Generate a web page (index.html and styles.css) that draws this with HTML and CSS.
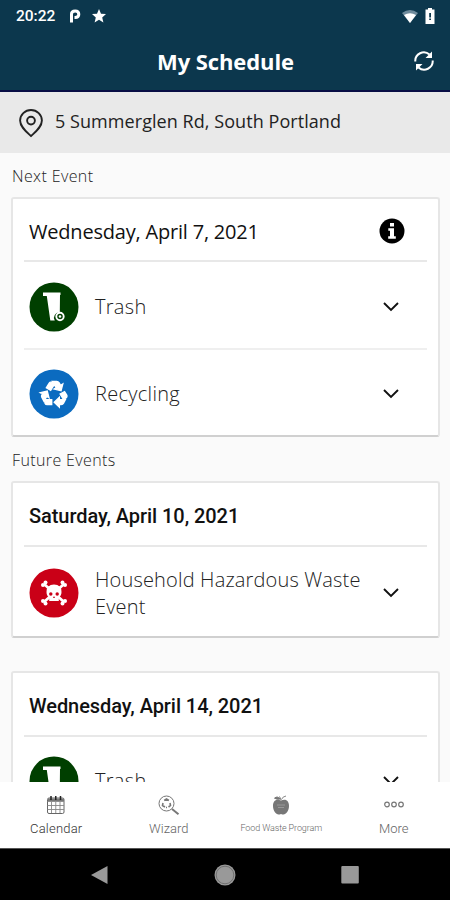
FILE: index.html
```
<!DOCTYPE html>
<html lang="en">
<head>
<meta charset="utf-8">
<title>My Schedule</title>
<link rel="stylesheet" href="styles.css">
</head>
<body>
<svg class="defs" width="0" height="0">
  <symbol id="chevron" viewBox="0 0 18 12"><path d="M2 2l7 7 7-7" fill="none" stroke="#111" stroke-width="1.9"/></symbol>
  <symbol id="bin" viewBox="0 0 50 50">
    <circle cx="25" cy="25" r="24.5" fill="#003f00"/>
    <path d="M14 10.500h17.500v2.600h-.5l-.2 17.500a5.200 5.200 0 0 0-5 8H21.300L17.800 14H14z" fill="#fff"/>
    <circle cx="31" cy="34.500" r="3.700" fill="none" stroke="#fff" stroke-width="1.900"/>
    <circle cx="31" cy="34.500" r="1.300" fill="#fff"/>
  </symbol>
</svg>
<div class="phone">
  <div class="status">
    <span class="time">20:22</span>
    <svg class="parking" width="12" height="14" viewBox="0 0 12 14"><path d="M2.500 13.500V5Q2.500 2 6.200 2q3.600 0 3.600 3.200T6.200 8.500H5.500" fill="none" stroke="#fff" stroke-width="3"/></svg>
    <svg class="star" width="14" height="14" viewBox="0 0 14 14"><path d="M7 0l2 4.700 5 .4-3.800 3.300L11.400 13.400 7 10.700 2.600 13.400l1.200-5L0 5.100l5-.4z" fill="#fff"/></svg>
    <svg class="wifi" width="16" height="13" viewBox="0 0 16 13"><path d="M0 3q8-6 16 0L8 13z" fill="#6f8b9c"/><path d="M2 5q6-3.500 12 0L8 13z" fill="#fff"/></svg>
    <svg class="battery" width="10" height="16" viewBox="0 0 10 16"><path d="M3 0h4v1.500h2.500V16H.5V1.500H3z" fill="#fff"/><path d="M4.200 5h1.800v4.500H4.200zM4.200 10.500h1.800V12H4.200z" fill="#0c374d"/></svg>
  </div>
  <header class="header">
    <h1>My Schedule</h1>
    <svg class="refresh" width="20" height="20" viewBox="0 0 20 20"><path d="M1.300 10.500A8.500 8.500 0 0 1 15.500 3.600M18.700 9.500A8.500 8.500 0 0 1 4.500 16.400" fill="none" stroke="#fff" stroke-width="2"/><path d="M18 .5V7h-6.500zM2 19.500V13h6.500z" fill="#fff"/></svg>
  </header>
  <div class="address">
    <svg width="26" height="30" viewBox="0 0 26 30"><path d="M13 28C8.500 23.800 2.100 19 2.100 12.500a10.900 10.500 0 0 1 21.800 0C23.900 19 17.500 23.800 13 28z" fill="none" stroke="#222" stroke-width="1.900"/><circle cx="13" cy="12.600" r="3.900" fill="none" stroke="#222" stroke-width="1.900"/></svg>
    <span>5 Summerglen Rd, South Portland</span>
  </div>
  <main class="content">
    <h2 class="next">Next Event</h2>
    <section class="card first">
      <div class="date regular"><span>Wednesday, April 7, 2021</span>
        <svg width="26" height="26" viewBox="0 0 26 26"><circle cx="13" cy="13" r="12.500"/><path d="M11 5h4v3.500h-4zM9.300 10.300H15v8h1.800v2.400H9.200v-2.400H11v-5.600H9.300z" fill="#fff"/></svg>
      </div>
      <div class="row"><svg class="badge"><use href="#bin"/></svg><span class="trash">Trash</span><svg class="chev"><use href="#chevron"/></svg></div>
      <div class="row">
        <svg class="badge" viewBox="0 0 50 50"><circle cx="25" cy="25" r="24.500" fill="#0b6bc0"/><g transform="translate(10 10) scale(1.270 1.220)" fill="#fff"><path d="M5.770 7.150 7.200 4.780l1.030-1.710c.39-.65 1.330-.65 1.720 0l1.480 2.460-1.230 2.060-1 1.620-3.430-2.060zm15.950 5.820-1.600-2.660-3.460 2L18.870 16H20c.76 0 1.450-.43 1.790-1.110.14-.28.21-.58.21-.89 0-.36-.1-.71-.28-1.030zM16 21h1.500c.76 0 1.450-.43 1.790-1.110L20.740 17H16v-2l-4 4 4 4v-2zm-6-4H5.700l-.84 1.410c-.3.5-.32 1.120-.06 1.650.28.570.87.940 1.520.94H10v-4zm-3.880-2.650 1.730 1.040L6.480 9.900 1 11.270l1.700 1.020-.41.690c-.35.590-.38 1.310-.07 1.920l1.630 3.260 2.270-3.810zm10.900-9.210-1.300-2.170C15.350 2.370 14.700 2 14 2h-3.530l3.120 5.200-1.720 1.030 5.490 1.370 1.370-5.490-1.710 1.030z" stroke="#fff" stroke-width="1.100"/></g></svg>
        <span class="recycling">Recycling</span><svg class="chev"><use href="#chevron"/></svg>
      </div>
    </section>
    <h2 class="future">Future Events</h2>
    <section class="card second">
      <div class="date bold"><span class="sat">Saturday, April 10, 2021</span></div>
      <div class="row">
        <svg class="badge" viewBox="0 0 50 50"><circle cx="25" cy="25" r="24.500" fill="#ca0017"/><g stroke="#fff" stroke-width="2.800"><path d="M15 16l20 18M35 16L15 34"/></g><g fill="#fff"><circle cx="14" cy="17" r="2"/><circle cx="16.500" cy="14.500" r="2"/><circle cx="36" cy="17" r="2"/><circle cx="33.500" cy="14.500" r="2"/><circle cx="14" cy="33" r="2"/><circle cx="16.500" cy="35.500" r="2"/><circle cx="36" cy="33" r="2"/><circle cx="33.500" cy="35.500" r="2"/><path d="M17.500 24q0-7.500 7.500-7.500t7.500 7.500q0 4-2.700 5.300V33H20.200v-3.700Q17.500 28 17.500 24z"/></g><g fill="#ca0017"><circle cx="21.800" cy="26" r="1.700"/><circle cx="28.200" cy="26" r="1.700"/><path d="M25 28l1 2h-2z"/></g></svg>
        <span class="hazard">Household Hazardous Waste<br>Event</span><svg class="chev"><use href="#chevron"/></svg>
      </div>
    </section>
    <section class="card third">
      <div class="date bold"><span class="wed">Wednesday, April 14, 2021</span></div>
      <div class="row"><svg class="badge"><use href="#bin"/></svg><span class="trash">Trash</span><svg class="chev"><use href="#chevron"/></svg></div>
    </section>
  </main>
  <nav class="tabs">
    <div class="tab active"><svg width="20" height="20" viewBox="0 0 20 20"><rect x="1.500" y="3" width="16.500" height="15.500" rx="1.500" fill="none" stroke="#666"/><path d="M1.500 6.500H18M1.500 10.500H18M1.500 14.500H18M5.500 7v11M9.750 7v11M14 7v11" stroke="#888" stroke-width=".9"/><path d="M2 4.800h16" stroke="#777" stroke-width="2.600"/><path d="M5 1v4M9.750 1v4M14.500 1v4" stroke="#222" stroke-width="1.500"/></svg><span class="calendar">Calendar</span></div>
    <div class="tab"><svg width="22" height="20" viewBox="0 0 22 20"><circle cx="8.500" cy="8.500" r="7.500" fill="none" stroke="#777"/><path d="M6.200 5.500L8.500 4l2.400 1.500M12 8l.5 2.500-2 1.500M7 12l-2.500-1.500L5 8M8 12.500h1" fill="none" stroke="#777" stroke-width="1.600"/><path d="M14 14l6.500 5.200" stroke="#777" stroke-width="2"/></svg><span class="wizard">Wizard</span></div>
    <div class="tab"><svg width="18" height="20" viewBox="0 0 18 20"><path d="M9 5.500C3.500 3.500 1 6.500 1 11s3 8.500 5.500 8.500q1.200 0 2.500-.5 1.300.5 2.500.5C14 19.500 17 15.500 17 11s-2.500-7.500-8-5.500z" fill="#777"/><path d="M9 5L7.500 1.500M8 4Q5.500.5 2.500 3.200 5.500 5 8 4z" fill="#777" stroke="#777"/><path d="M9.500 4.500q1-3 4.500-3.500" fill="none" stroke="#888"/><path d="M5 10h8M6 12.500h6" stroke="#999" stroke-width="1"/></svg><span class="food">Food Waste Program</span></div>
    <div class="tab"><svg width="20" height="20" viewBox="0 0 20 20"><g fill="none" stroke="#777" stroke-width="1.200"><circle cx="3" cy="9.500" r="2.300"/><circle cx="10" cy="9.500" r="2.300"/><circle cx="17" cy="9.500" r="2.300"/></g></svg><span class="more">More</span></div>
  </nav>
  <div class="system">
    <svg width="24" height="24" viewBox="0 0 24 24"><path d="M3 12L19.500 3v18z" fill="#999"/></svg>
    <svg width="24" height="24" viewBox="0 0 24 24"><circle cx="12" cy="12" r="10.500" fill="#999"/><circle cx="12" cy="12" r="8.800" fill="none" stroke="#666" stroke-width=".8"/></svg>
    <svg width="24" height="24" viewBox="0 0 24 24"><rect x="3.300" y="3" width="17.500" height="17.500" rx="1" fill="#999"/></svg>
  </div>
</div>
</body>
</html>
```
FILE: styles.css
```
* { box-sizing: border-box; margin: 0; }
body { background: #fafafa; font-family: "Open Sans", "Noto Sans", sans-serif; color: #222; }
svg { display: block; flex: none; }
.defs { position: absolute; }
span { white-space: nowrap; }
.phone { width: 450px; height: 900px; display: flex; flex-direction: column; overflow: hidden; }
.status { height: 32px; flex: none; background: #0c374d; color: #fff; display: flex; align-items: center; padding: 0 15px 0 16px; }
.time { font: 500 15.500px/20px Roboto, sans-serif; width: 52px; }
.parking { margin-left: 1px; }
.star { margin-left: 11px; }
.wifi { margin-left: auto; }
.battery { margin-left: 7px; }
.header { height: 60px; flex: none; background: #0c374d; border-bottom: 2px solid #080d45; display: grid; grid-template-columns: 1fr auto 1fr; align-items: center; padding-right: 16px; padding-left: 17px; color: #fff; }
.header h1 { grid-column: 2; font-size: 22px; font-weight: 700; line-height: 30px; letter-spacing: -.1px; }
.refresh { justify-self: end; }
.address { height: 61px; flex: none; background: #e9e9e9; display: flex; align-items: center; padding-left: 18px; gap: 11px; font-size: 18px; letter-spacing: .06px; }
.address span { line-height: 26px; margin-top: -4px; }
.content { flex: 1; min-height: 0; overflow: hidden; padding: 0 10px 0 11px; }
h2 { font-size: 16px; font-weight: 300; line-height: 22px; color: #222; padding-left: 1px; letter-spacing: .38px; height: 44px; }
.next, .future { padding-top: 12px; }
.card { background: #fff; border: 2px solid #e6e6e6; border-bottom-color: #d0d0d0; border-radius: 3px; padding: 0 11px; }
.first { height: 240px; }
.second { height: 157px; margin-bottom: 33px; }
.third { height: 180px; }
.date { height: 63px; display: flex; align-items: center; justify-content: space-between; padding: 3px 22px 0 5px; font-size: 20px; color: #111; border-bottom: 2px solid #e8e8e8; }
.regular { letter-spacing: -.2px; }
.bold { font-family: Roboto, sans-serif; font-weight: 500; padding-top: 4px; height: 64px; letter-spacing: -.06px; }
.row { height: 86px; display: flex; align-items: center; padding: 3px 27px 0 5px; font-size: 20px; font-weight: 300; letter-spacing: .3px; }
.row + .row { border-top: 2px solid #efefef; height: 88px; padding-top: 1px; }
.badge { width: 50px; height: 50px; margin-right: 16px; }
.chev { width: 18px; height: 12px; margin-left: auto; }
.hazard { line-height: 27px; letter-spacing: .17px; }
.second .row { height: 90px; padding-top: 1px; }
.third .row { height: 87px; padding-top: 0; }
.tabs { height: 66px; flex: none; background: #fff; display: grid; grid-template-columns: repeat(4, 112.500px); font: 300 13px/17px Roboto, sans-serif; color: #666; }
.tab { display: flex; flex-direction: column; align-items: center; padding-top: 13px; gap: 5px; }
.active { color: #333; }
.calendar { letter-spacing: .2px; }
.food { font-size: 9px; letter-spacing: -.1px; }
.system { height: 52px; flex: none; background: #000; display: flex; justify-content: space-between; align-items: center; padding: 0 88px; border-top: 1px solid #555; }
```
